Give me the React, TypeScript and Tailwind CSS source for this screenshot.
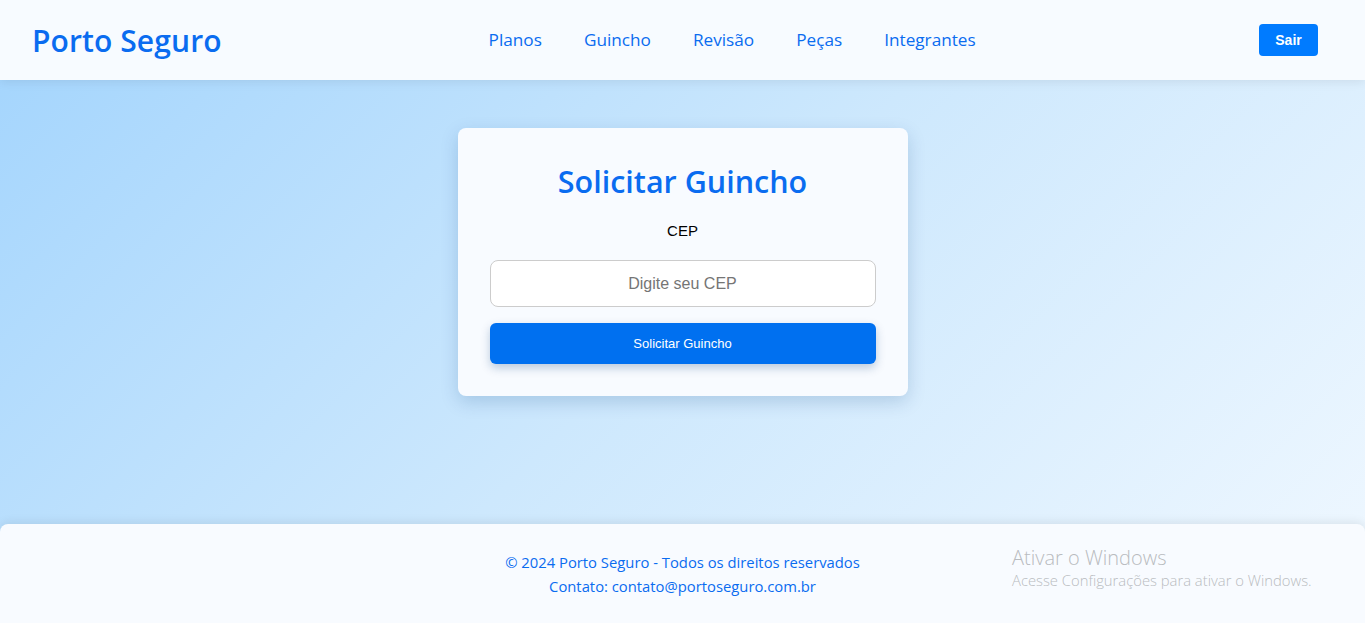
const sans = "font-['Open_Sans','Noto_Sans',sans-serif]";
const arial = "font-['Liberation_Sans',Arial,sans-serif]";

const links = ['Planos', 'Guincho', 'Revisão', 'Peças', 'Integrantes'];

function Header() {
  return (
    <header className="h-20 shrink-0 bg-[#f7fbff] shadow-[0_2px_10px_rgba(0,0,0,0.08)] flex items-center pl-8 pr-[47px] relative z-10">
      <div className={`${sans} text-[30px] font-semibold text-[#0a6cf0] tracking-[0.1px]`}>Porto Seguro</div>
      <nav className="flex items-center gap-[42px] ml-[267px]">
        {links.map((l) => (
          <a key={l} className={`${sans} text-[17.2px] font-medium text-[#0a6cf0]`}>
            {l}
          </a>
        ))}
      </nav>
      <button className={`${arial} ml-auto w-[59px] h-8 rounded bg-[#007bff] text-white text-sm font-bold`}>Sair</button>
    </header>
  );
}

function GuinchoCard() {
  return (
    <div className="w-[450px] mt-12 rounded-lg bg-[#f8fbff] shadow-[0_6px_18px_rgba(0,60,120,0.18)] px-8 pt-8 pb-8 flex flex-col items-center">
      <h1 className={`${sans} text-[30.5px] leading-[42px] font-semibold text-[#0a6cf0]`}>Solicitar Guincho</h1>
      <label className={`${arial} mt-[17px] text-[15px] leading-6 text-black`}>CEP</label>
      <input
        placeholder="Digite seu CEP"
        className={`${arial} mt-[17px] w-full h-[47px] rounded-lg border border-[#cccccc] bg-white text-center text-[16px] placeholder:text-[#757575] outline-none`}
      />
      <button className={`${arial} mt-4 w-full h-[41px] rounded-md bg-[#0070f0] text-white text-[13px] shadow-[0_4px_10px_rgba(0,60,120,0.25)]`}>
        Solicitar Guincho
      </button>
    </div>
  );
}

function Footer() {
  return (
    <footer className="relative shrink-0 bg-[#f8fbff] rounded-t-lg shadow-[0_-2px_10px_rgba(0,0,0,0.08)] pt-[26px] pb-[25px] flex flex-col items-center">
      <p className={`${sans} text-[14.8px] leading-6 text-[#0a6cf0]`}>© 2024 Porto Seguro - Todos os direitos reservados</p>
      <p className={`${sans} text-[14.8px] leading-6 text-[#0a6cf0]`}>Contato: contato@portoseguro.com.br</p>
      <div className={`${sans} absolute left-[1012px] top-[22px] text-[#b9bcc0]`}>
        <div className="text-[20px] leading-6 font-light">Ativar o Windows</div>
        <div className="text-[14.8px] leading-5 font-light">Acesse Configurações para ativar o Windows.</div>
      </div>
    </footer>
  );
}

export default function App() {
  return (
    <div className="min-h-screen flex flex-col bg-[linear-gradient(135deg,#a2d4fd_0%,#cde8fd_50%,#f0f8ff_100%)]">
      <Header />
      <main className="flex-1 flex justify-center items-start">
        <GuinchoCard />
      </main>
      <Footer />
    </div>
  );
}
